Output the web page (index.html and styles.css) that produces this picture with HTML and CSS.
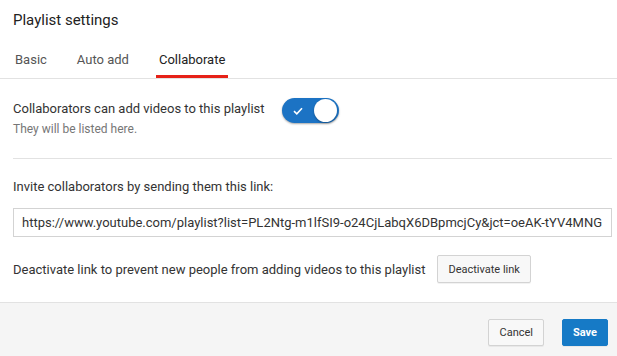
FILE: index.html
```html
<!DOCTYPE html>
<html>
<head>
  <meta charset="UTF-8">
  <title>Playlist settings</title>
  <link rel="stylesheet" href="styles.css">
</head>
<body>
  <div class="dialog">
    <h1 class="title">Playlist settings</h1>
    <div class="tabs">
      <span class="tab">Basic</span>
      <span class="tab">Auto add</span>
      <span class="tab active">Collaborate</span>
    </div>

    <div class="content">
      <div class="toggle-row">
        <div class="toggle-text">
          <div class="label">Collaborators can add videos to this playlist</div>
          <div class="hint">They will be listed here.</div>
        </div>
        <div class="switch">
          <svg class="check" width="10" height="8" viewBox="0 0 10 8">
            <path d="M1 4.2 L3.8 6.8 L9 1.2" fill="none" stroke="#fff" stroke-width="1.6"/>
          </svg>
          <span class="knob"></span>
        </div>
      </div>

      <div class="divider"></div>

      <p class="invite">Invite collaborators by sending them this link:</p>
      <input class="link-box" type="text" readonly value="https://www.youtube.com/playlist?list=PL2Ntg-m1lfSI9-o24CjLabqX6DBpmcjCy&amp;jct=oeAK-tYV4MNG">

      <div class="deactivate-row">
        <span>Deactivate link to prevent new people from adding videos to this playlist</span>
        <button class="btn">Deactivate link</button>
      </div>
    </div>

    <div class="footer">
      <button class="btn">Cancel</button>
      <button class="btn primary">Save</button>
    </div>
  </div>
</body>
</html>
```

FILE: styles.css
```css
/* Reset & basic styling */
* { box-sizing: border-box; }
body {
  margin: 0;
  padding: 0;
  font-family: Roboto, "Liberation Sans", Arial, sans-serif;
  background: #fff;
  color: #333;
}
.dialog {
  width: 617px;
  height: 356px;
  display: flex;
  flex-direction: column;
  background: #fff;
}
.title {
  margin: 0;
  padding: 10px 13px 0;
  font-size: 15px;
  font-weight: 400;
  line-height: 20px;
  color: #222;
}
/* Tabs */
.tabs {
  display: flex;
  margin-top: 20px;
  padding-left: 12px;
  border-bottom: 1px solid #e2e2e2;
}
.tab {
  padding: 0 3px;
  height: 28px;
  line-height: 20px;
  font-size: 13px;
  font-weight: 400;
  color: #555;
  margin-right: 24px;
}
.tab.active {
  color: #222;
  box-shadow: inset 0 -3px 0 #e62117;
}
/* Main area */
.content {
  padding: 0 5px 0 13px;
  flex: 1;
}
.toggle-row {
  display: flex;
  align-items: flex-start;
  margin-top: 19px;
}
.toggle-text { margin-top: 3px; }
.label {
  font-size: 13px;
  line-height: 16px;
  color: #333;
}
.hint {
  font-size: 12px;
  line-height: 16px;
  margin-top: 4px;
  color: #767676;
}
.switch {
  position: relative;
  width: 57px;
  height: 25px;
  margin-left: 17px;
  border-radius: 13px;
  background: #1c73c4;
  box-shadow: 0 1px 2px rgba(0,0,0,0.35);
}
.switch .check {
  position: absolute;
  left: 11px;
  top: 9px;
}
.switch .knob {
  position: absolute;
  right: 2px;
  top: 1px;
  width: 23px;
  height: 23px;
  border-radius: 50%;
  background: #fff;
  box-shadow: 0 1px 2px rgba(0,0,0,0.3);
}
.divider {
  height: 1px;
  background: #e2e2e2;
  margin: 21px 0 0;
  width: 599px;
}
.invite {
  margin: 20px 0 0;
  font-size: 13px;
  line-height: 16px;
  color: #333;
}
.link-box {
  display: block;
  width: 599px;
  height: 29px;
  margin-top: 13px;
  padding: 0 8px;
  border: 1px solid #d3d3d3;
  font-family: inherit;
  font-size: 13px;
  color: #333;
  outline: none;
}
.deactivate-row {
  display: flex;
  align-items: center;
  margin-top: 18px;
  font-size: 13px;
  color: #333;
}
.deactivate-row .btn { margin-left: 12px; }
.btn {
  height: 28px;
  padding: 0 10px;
  border: 1px solid #d3d3d3;
  border-radius: 2px;
  background: #f8f8f8;
  font-family: inherit;
  font-size: 11px;
  font-weight: 400;
  color: #333;
  box-shadow: 0 1px 0 rgba(0,0,0,0.05);
  cursor: pointer;
}
/* Footer */
.footer {
  display: flex;
  justify-content: flex-end;
  align-items: center;
  gap: 18px;
  height: 54px;
  padding: 5px 9px 0 0;
  background: #f5f5f5;
  border-top: 1px solid #e2e2e2;
}
.footer .btn { height: 27px; padding: 0 10px; }
.btn.primary {
  background: #167ac6;
  border-color: #167ac6;
  color: #fff;
  font-weight: 700;
}
```
